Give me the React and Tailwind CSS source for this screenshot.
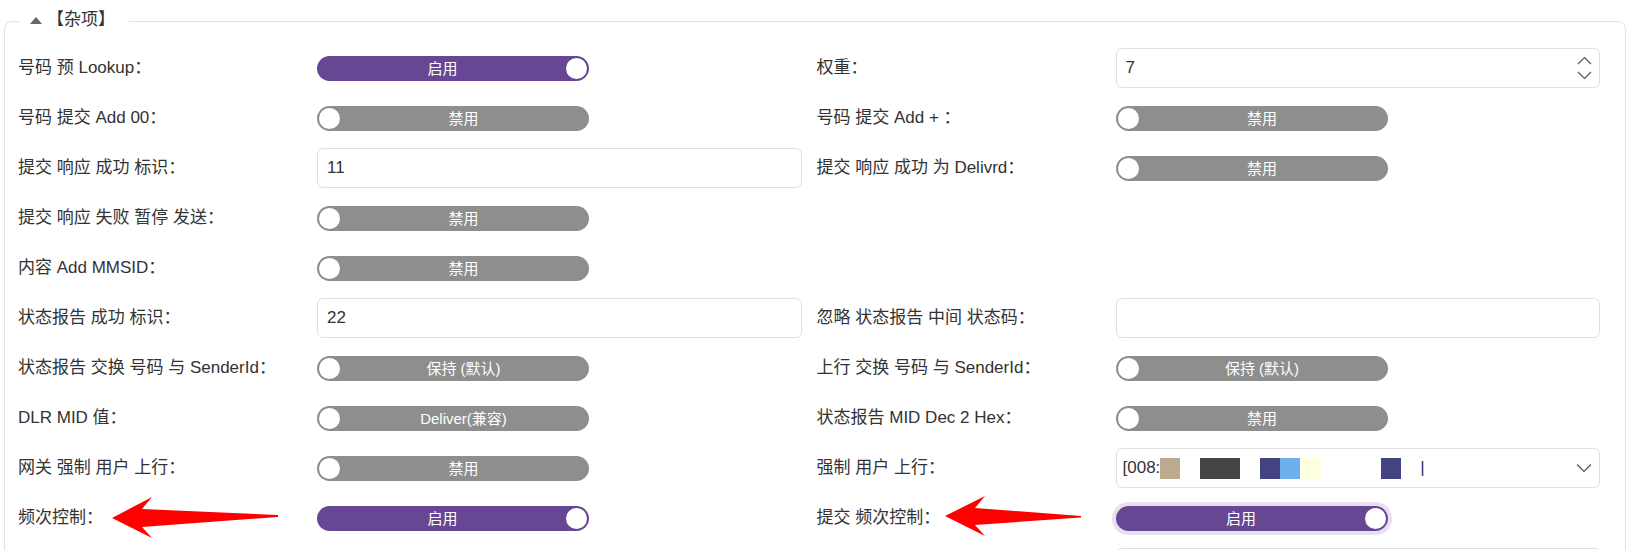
const Toggle = ({ on = false, text, focus = false }) => {
  return (
    <div
      className={`flex h-[25px] w-[272px] items-center rounded-full px-[2px] text-[15px] text-white ${
        on ? "bg-[#674793]" : "bg-[#8e8e8e]"
      } ${focus ? "ring-4 ring-[#e7e0f0]" : ""}`}
    >
      {!on && <span className="h-[21px] w-[21px] shrink-0 rounded-full bg-white"></span>}
      <span className="flex-1 text-center leading-none">{text}</span>
      {on && <span className="h-[21px] w-[21px] shrink-0 rounded-full bg-white"></span>}
    </div>
  );
};

const TextBox = ({ value }) => {
  return (
    <input
      readOnly
      value={value}
      className="h-10 w-full rounded-md border border-[#e0e0e0] bg-white px-[9px] text-[17px] text-[#333] outline-none"
    />
  );
};

const NumberBox = ({ value }) => {
  return (
    <div className="flex h-10 w-full items-center rounded-md border border-[#e0e0e0] pl-[9px] pr-[7px] text-[17px] text-[#333]">
      <span className="flex-1">{value}</span>
      <svg width="15" height="24" viewBox="0 0 15 24" fill="none" stroke="#555" strokeWidth="1.1">
        <path d="M1 8 L7.5 1.5 L14 8" />
        <path d="M1 16 L7.5 22.5 L14 16" />
      </svg>
    </div>
  );
};

const SelectBox = () => {
  return (
    <div className="flex h-10 w-full items-center rounded-md border border-[#e0e0e0] pl-[6px] pr-[7px] text-[17px] text-[#333]">
      <div className="flex flex-1 items-center">
        <span>[008:</span>
        <span className="h-[21px] w-[20px] bg-[#bcaa8e]"></span>
        <span className="ml-[20px] h-[21px] w-[40px] bg-[#444444]"></span>
        <span className="ml-[20px] h-[21px] w-[20px] bg-[#444382]"></span>
        <span className="h-[21px] w-[20px] bg-[#6db0eb]"></span>
        <span className="h-[21px] w-[21px] bg-[#fefee1]"></span>
        <span className="ml-[60px] h-[21px] w-[20px] bg-[#444382]"></span>
        <span className="ml-[19px] text-[#333366]">|</span>
      </div>
      <svg width="16" height="10" viewBox="0 0 16 10" fill="none" stroke="#555" strokeWidth="1.2">
        <path d="M1 1.5 L8 8.5 L15 1.5" />
      </svg>
    </div>
  );
};

const LeftArrow = () => (
  <svg className="absolute left-[94px] top-[3px]" width="167" height="43" viewBox="0 0 167 43">
    <polygon points="0,22 40,1 30,13 166,19 166,21 30,31 40,42" fill="#ff0000" />
  </svg>
);

const RightArrow = () => (
  <svg className="absolute left-[128px] top-[2px]" width="137" height="42" viewBox="0 0 137 42">
    <polygon points="0,21 40,1 30,13 136,21 136,22.5 30,30 40,41" fill="#ff0000" />
  </svg>
);

const Field = ({ item }) => {
  if (!item) return <div className="h-[50px]"></div>;
  return (
    <div className="relative flex h-[50px] items-center">
      <div className="w-[299px] shrink-0 text-[17px] text-[#333]">{item.label}</div>
      <div className="flex flex-1 items-center">{item.control}</div>
      {item.arrow}
    </div>
  );
};

const rows = [
  [
    { label: "号码 预 Lookup：", control: <Toggle on text="启用" /> },
    { label: "权重：", control: <NumberBox value="7" /> },
  ],
  [
    { label: "号码 提交 Add 00：", control: <Toggle text="禁用" /> },
    { label: "号码 提交 Add + ：", control: <Toggle text="禁用" /> },
  ],
  [
    { label: "提交 响应 成功 标识：", control: <TextBox value="11" /> },
    { label: "提交 响应 成功 为 Delivrd：", control: <Toggle text="禁用" /> },
  ],
  [{ label: "提交 响应 失败 暂停 发送：", control: <Toggle text="禁用" /> }, null],
  [{ label: "内容 Add MMSID：", control: <Toggle text="禁用" /> }, null],
  [
    { label: "状态报告 成功 标识：", control: <TextBox value="22" /> },
    { label: "忽略 状态报告 中间 状态码：", control: <TextBox value="" /> },
  ],
  [
    { label: "状态报告 交换 号码 与 SenderId：", control: <Toggle text="保持 (默认)" /> },
    { label: "上行 交换 号码 与 SenderId：", control: <Toggle text="保持 (默认)" /> },
  ],
  [
    { label: "DLR MID 值：", control: <Toggle text="Deliver(兼容)" /> },
    { label: "状态报告 MID Dec 2 Hex：", control: <Toggle text="禁用" /> },
  ],
  [
    { label: "网关 强制 用户 上行：", control: <Toggle text="禁用" /> },
    { label: "强制 用户 上行：", control: <SelectBox /> },
  ],
  [
    { label: "频次控制：", control: <Toggle on text="启用" />, arrow: <LeftArrow /> },
    { label: "提交 频次控制：", control: <Toggle on focus text="启用" />, arrow: <RightArrow /> },
  ],
  [null, { label: "", control: <TextBox value="" /> }],
];

export default function App() {
  return (
    <div className="h-[550px] overflow-hidden bg-white font-['Liberation_Sans','Noto_Sans_CJK_SC',sans-serif]">
      <fieldset className="ml-1 mr-[7px] rounded-lg border border-[#e2e2e2] pl-[13px] pr-[25px] pb-4">
        <legend className="ml-[1px] pl-[11px] pr-[14px] pt-[10px] pb-[13px]">
          <div className="flex items-center text-[17px] leading-5 text-[#333]">
            <svg width="12" height="7" viewBox="0 0 12 7">
              <polygon points="6,0 12,7 0,7" fill="#666" />
            </svg>
            <span className="ml-[5px]">【杂项】</span>
          </div>
        </legend>
        <div className="grid grid-cols-2 gap-x-[15px]">
          {rows.map((row, i) => (
            <div key={i} className="contents">
              <Field item={row[0]} />
              <Field item={row[1]} />
            </div>
          ))}
        </div>
      </fieldset>
    </div>
  );
}
